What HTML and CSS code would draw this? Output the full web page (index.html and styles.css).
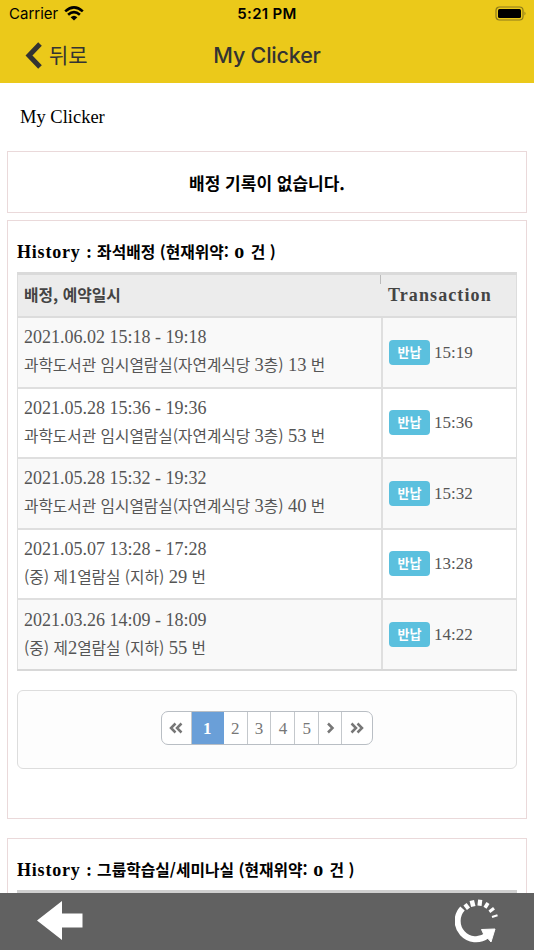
FILE: index.html
```
<!DOCTYPE html>
<html lang="ko">
<head>
  <meta charset="UTF-8">
  <meta name="viewport" content="width=device-width, initial-scale=1.0">
  <title>My Clicker</title>
  <link rel="stylesheet" href="styles.css">
</head>
<body>
  <header class="topbar">
    <div class="status">
      <div class="carrier">
        <span>Carrier</span>
        <svg class="wifi" viewBox="0 0 20 15">
          <path d="M1.2 5.4Q10-2.6 18.8 5.4" />
          <path d="M4.1 8.8Q10 3.400 15.9 8.8" />
          <path class="dot" d="M6.6 11.200Q10 8.200 13.4 11.200L10 14.6Z" />
        </svg>
      </div>
      <span class="clock">5:21 PM</span>
      <svg class="battery" viewBox="0 0 32 16">
        <rect class="shell" x="1" y="1" width="27" height="13" rx="3.5" />
        <rect x="3" y="3" width="23" height="9" rx="1.5" />
        <path class="cap" d="M29.5 5.5q2 2 0 4z" />
      </svg>
    </div>
    <nav class="navbar">
      <a class="back" href="#">
        <svg viewBox="0 0 17 27"><path d="M15 2L4 13.500L15 25" /></svg>
        <span>뒤로</span>
      </a>
      <h1 class="title">My Clicker</h1>
    </nav>
  </header>

  <main class="content">
    <h2 class="page-name">My Clicker</h2>

    <section class="card empty">배정 기록이 없습니다.</section>

    <section class="card seats">
      <h3 class="card-title"><span class="en">History :</span> 좌석배정 (현재위약: <span class="zero">o</span> 건 )</h3>
      <table class="history">
        <thead>
          <tr><th class="when">배정, 예약일시</th><th class="trans">Transaction</th></tr>
        </thead>
        <tbody>
          <tr>
            <td><div class="date">2021.06.02 15:18 - 19:18</div><div class="place">과학도서관 임시열람실(자연계식당 <span class="num">3</span>층) <span class="num">13</span> 번</div></td>
            <td><span class="badge">반납</span><span class="time">15:19</span></td>
          </tr>
          <tr>
            <td><div class="date">2021.05.28 15:36 - 19:36</div><div class="place">과학도서관 임시열람실(자연계식당 <span class="num">3</span>층) <span class="num">53</span> 번</div></td>
            <td><span class="badge">반납</span><span class="time">15:36</span></td>
          </tr>
          <tr>
            <td><div class="date">2021.05.28 15:32 - 19:32</div><div class="place">과학도서관 임시열람실(자연계식당 <span class="num">3</span>층) <span class="num">40</span> 번</div></td>
            <td><span class="badge">반납</span><span class="time">15:32</span></td>
          </tr>
          <tr>
            <td><div class="date">2021.05.07 13:28 - 17:28</div><div class="place">(중) 제<span class="num">1</span>열람실 (지하) <span class="num">29</span> 번</div></td>
            <td><span class="badge">반납</span><span class="time">13:28</span></td>
          </tr>
          <tr>
            <td><div class="date">2021.03.26 14:09 - 18:09</div><div class="place">(중) 제<span class="num">2</span>열람실 (지하) <span class="num">55</span> 번</div></td>
            <td><span class="badge">반납</span><span class="time">14:22</span></td>
          </tr>
        </tbody>
      </table>
      <div class="pager-box">
        <div class="pager">
          <a class="edge" href="#"><svg viewBox="0 0 14 12"><path d="M6.5 1.5L2 6l4.500 4.500M12.500 1.500L8 6l4.500 4.500" /></svg></a>
          <a class="current" href="#">1</a>
          <a href="#">2</a>
          <a href="#">3</a>
          <a href="#">4</a>
          <a href="#">5</a>
          <a class="next" href="#"><svg viewBox="0 0 14 12"><path d="M5 1.500L9.500 6L5 10.500" /></svg></a>
          <a class="edge" href="#"><svg viewBox="0 0 14 12"><path d="M1.500 1.500L6 6l-4.500 4.500M7.500 1.500L12 6l-4.500 4.500" /></svg></a>
        </div>
      </div>
    </section>

    <section class="card rooms">
      <h3 class="card-title"><span class="en">History :</span> 그룹학습실/세미나실 (현재위약: <span class="zero">o</span> 건 )</h3>
      <div class="history-top"></div>
    </section>
  </main>

  <footer class="toolbar">
    <svg class="prev" viewBox="0 0 46 39"><path d="M0 19.500L25 0V12.500H45.500V26.500H25V39Z" /></svg>
    <svg class="reload" viewBox="0 0 44 44">
      <path class="arc" d="M7.500 9.500A18.300 18.300 0 0 0 32 36.500" />
      <path class="head" d="M26.500 30.500L40 30L36 43L33.500 40L29.500 37Z" />
      <path class="tick" stroke-width="4" d="M10 5.200l3.500 4.500" />
      <path class="tick" stroke-width="4.600" d="M16.800 1.500l1.500 6" />
      <path class="tick" stroke-width="4.200" d="M25.200.8l-.7 6" />
      <path class="tick" stroke-width="3.600" d="M33 4l-3 4.800" />
      <path class="tick" stroke-width="3" d="M39 9.300l-4.600 3.500" />
      <path class="tick" stroke-width="2.200" d="M42.500 16.300l-5.500 1.700" />
    </svg>
  </footer>
</body>
</html>
```
FILE: styles.css
```
* {
  box-sizing: border-box;
}

body {
  margin: 0;
  height: 950px;
  display: flex;
  flex-direction: column;
  overflow: hidden;
  background: #fff;
  color: #000;
  font-family: "Liberation Serif", "Noto Sans CJK KR", serif;
}

a {
  color: inherit;
  text-decoration: none;
}

h1, h2, h3 {
  margin: 0;
}

/* top bar */
.topbar {
  flex: none;
  height: 83px;
  background: #ebc91a;
  font-family: Inter, "Noto Sans CJK KR", sans-serif;
}

.status {
  display: grid;
  grid-template-columns: 1fr auto 1fr;
  align-items: center;
  height: 27px;
  padding: 0 7px 0 9px;
}

.carrier {
  display: flex;
  align-items: center;
  gap: 6px;
  font-size: 15px;
}

.wifi {
  width: 20px;
  height: 15px;
  fill: none;
  stroke: #000;
  stroke-width: 2.6;
}

.wifi .dot {
  fill: #000;
  stroke: none;
}

.clock {
  margin-right: 2px;
  font-size: 15px;
  font-weight: 600;
  letter-spacing: 0.3px;
}

.battery {
  justify-self: end;
  width: 32px;
  height: 16px;
}

.battery .shell {
  fill: none;
  stroke: #8d7a1c;
  stroke-width: 1.2;
}

.battery .cap {
  fill: #8d7a1c;
}

.navbar {
  display: grid;
  grid-template-columns: 1fr auto 1fr;
  align-items: center;
  height: 56px;
  padding: 0 25px;
  color: #333;
}

.back {
  display: flex;
  align-items: center;
  gap: 7px;
  font-size: 21px;
}

.back span {
  margin-top: -2px;
}

.back svg {
  width: 17px;
  height: 27px;
  fill: none;
  stroke: #333;
  stroke-width: 5;
}

.title {
  font-size: 21.5px;
  font-weight: 550;
  letter-spacing: -0.2px;
}

/* content */
.content {
  flex: 1;
  min-height: 0;
  overflow: hidden;
  padding: 0 7px;
}

.page-name {
  height: 68px;
  padding-left: 13px;
  font-size: 18.5px;
  font-weight: normal;
  line-height: 68px;
}

.card {
  border: 1px solid #ead9da;
  padding: 0 9px;
}

.empty {
  height: 62px;
  margin-bottom: 7px;
  font-family: "Noto Sans CJK KR", sans-serif;
  font-size: 17px;
  font-weight: bold;
  line-height: 61px;
  text-align: center;
}

.seats {
  height: 599px;
  margin-bottom: 19px;
}

.card-title {
  height: 51px;
  font-family: "Noto Sans CJK KR", sans-serif;
  font-size: 15.8px;
  line-height: 61px;
  white-space: nowrap;
}

.card-title .en {
  font-family: "Liberation Serif", serif;
  font-size: 18px;
  letter-spacing: 0.8px;
  line-height: 1;
}

.card-title .zero {
  margin: 0 2px 0 1px;
  font-family: "Liberation Serif", serif;
  font-size: 20px;
  line-height: 1;
}

.history {
  width: 500px;
  table-layout: fixed;
  border-collapse: separate;
  border-spacing: 0;
  border-top: 3px solid #dadada;
  border-bottom: 2px solid #d8d8d8;
}

.history th {
  height: 43px;
  padding: 0 6px 3px;
  border-bottom: 2px solid #dcdcdc;
  background: #ececec;
  color: #444;
  text-align: left;
}

.history .when {
  width: 364px;
  border-left: 1px solid #ddd;
  font-family: "Noto Sans CJK KR", sans-serif;
  font-size: 15.8px;
  /* short divider hanging from the top edge */
  background: linear-gradient(#bbb, #bbb) right top / 1px 9px no-repeat #ececec;
}

.history .trans {
  padding-bottom: 1px;
  padding-left: 7px;
  border-right: 1px solid #ddd;
  font-size: 18px;
  letter-spacing: 1.1px;
}

.history td {
  height: 70.5px;
  padding: 0 6px 2px;
  border-bottom: 2px solid #dfdfdf;
  border-left: 1px solid #dfdfdf;
  color: #555;
}

.history td:last-child {
  padding-bottom: 0;
  border-left-width: 2px;
  border-right: 1px solid #dfdfdf;
}

.history tbody tr:nth-child(odd) {
  background: #f9f9f9;
}

.history tbody tr:last-child td {
  height: 69px;
  border-bottom: none;
}

/* top edge of the next table, just above the toolbar */
.history-top {
  height: 3px;
  background: #d0d0d0;
}

.date {
  height: 28px;
  font-size: 18px;
  line-height: 28px;
}

.place {
  height: 28px;
  font-family: "Noto Sans CJK KR", sans-serif;
  font-size: 15.7px;
  line-height: 28px;
  white-space: nowrap;
}

.place .num {
  font-family: "Liberation Serif", serif;
  font-size: 18.5px;
  line-height: 1;
}

.badge {
  display: inline-block;
  width: 41px;
  height: 25px;
  margin-right: 4px;
  border-radius: 4px;
  background: #5bc0de;
  color: #fff;
  font-family: "Noto Sans CJK KR", sans-serif;
  font-size: 13px;
  font-weight: bold;
  line-height: 23px;
  text-align: center;
  vertical-align: middle;
}

.time {
  font-size: 17px;
  vertical-align: middle;
}

/* pager */
.pager-box {
  display: flex;
  align-items: center;
  justify-content: center;
  height: 79px;
  margin-top: 19px;
  padding-bottom: 4px;
  border: 1px solid #ddd;
  border-radius: 6px;
  background: #fdfdfd;
}

.pager {
  display: flex;
  width: 212px;
  height: 34px;
  overflow: hidden;
  border: 1px solid #b9bec4;
  border-radius: 7px;
  background: #fff;
  color: #777;
  font-size: 17px;
}

.pager a {
  display: flex;
  align-items: center;
  justify-content: center;
  width: 24px;
  padding-top: 3px;
  border-right: 1px solid #c4c8cc;
}

.pager a:last-child {
  border-right: none;
}

.pager .edge {
  width: 30px;
  padding: 0;
}

.pager .next {
  width: 23px;
  padding: 0;
}

.pager .current {
  width: 32px;
  border-color: #6a9fd8;
  background: #6a9fd8;
  color: #fff;
  font-weight: bold;
}

.pager svg {
  width: 14px;
  height: 12px;
  fill: none;
  stroke: #777;
  stroke-width: 2.5;
}

/* bottom toolbar */
.toolbar {
  flex: none;
  display: flex;
  justify-content: space-between;
  height: 57px;
  padding: 6px 35px 0 37px;
  background: #616161;
}

.prev {
  width: 46px;
  height: 39px;
  margin-top: 2px;
  fill: #fff;
}

.reload {
  width: 44px;
  height: 44px;
  fill: none;
  stroke: #fff;
}

.reload .arc {
  stroke-width: 6;
}

.reload .head {
  fill: #fff;
}
```
